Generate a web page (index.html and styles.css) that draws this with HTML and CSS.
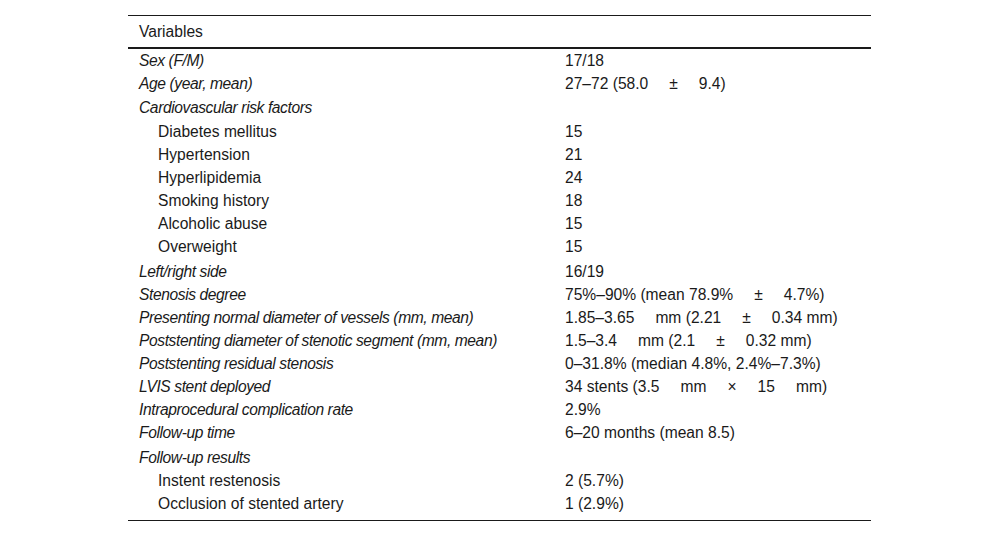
FILE: index.html
```html
<!DOCTYPE html>
<html>
<head>
<meta charset="utf-8">
<link rel="stylesheet" href="styles.css">
</head>
<body>
<div class="wrap">
<table class="tbl">
  <thead>
    <tr><th class="c1">Variables</th><th class="c2"></th></tr>
  </thead>
  <tbody>
    <tr class="first"><td class="lab">Sex (F/M)</td><td>17/18</td></tr>
    <tr><td class="lab">Age (year, mean)</td><td>27–72 (58.0<span class="g"></span>±<span class="g"></span>9.4)</td></tr>
    <tr class="grp"><td class="lab">Cardiovascular risk factors</td><td></td></tr>
    <tr class="after"><td class="sub">Diabetes mellitus</td><td>15</td></tr>
    <tr><td class="sub">Hypertension</td><td>21</td></tr>
    <tr><td class="sub">Hyperlipidemia</td><td>24</td></tr>
    <tr><td class="sub">Smoking history</td><td>18</td></tr>
    <tr><td class="sub">Alcoholic abuse</td><td>15</td></tr>
    <tr><td class="sub">Overweight</td><td>15</td></tr>
    <tr class="grp2"><td class="lab">Left/right side</td><td>16/19</td></tr>
    <tr><td class="lab">Stenosis degree</td><td>75%–90% (mean 78.9%<span class="g"></span>±<span class="g"></span>4.7%)</td></tr>
    <tr><td class="lab">Presenting normal diameter of vessels (mm, mean)</td><td>1.85–3.65<span class="g"></span>mm (2.21<span class="g"></span>±<span class="g"></span>0.34 mm)</td></tr>
    <tr><td class="lab">Poststenting diameter of stenotic segment (mm, mean)</td><td>1.5–3.4<span class="g"></span>mm (2.1<span class="g"></span>±<span class="g"></span>0.32 mm)</td></tr>
    <tr><td class="lab">Poststenting residual stenosis</td><td>0–31.8% (median 4.8%, 2.4%–7.3%)</td></tr>
    <tr><td class="lab">LVIS stent deployed</td><td>34 stents (3.5<span class="g"></span>mm<span class="g"></span>×<span class="g"></span>15<span class="g"></span>mm)</td></tr>
    <tr><td class="lab">Intraprocedural complication rate</td><td>2.9%</td></tr>
    <tr><td class="lab">Follow-up time</td><td>6–20 months (mean 8.5)</td></tr>
    <tr class="grp2"><td class="lab">Follow-up results</td><td></td></tr>
    <tr><td class="sub">Instent restenosis</td><td>2 (5.7%)</td></tr>
    <tr class="last"><td class="sub">Occlusion of stented artery</td><td>1 (2.9%)</td></tr>
  </tbody>
</table>
</div>
</body>
</html>
```
FILE: styles.css
```css
html, body {
  margin: 0;
  padding: 0;
  background: #fff;
}
body {
  font-family: "Liberation Sans", Arial, sans-serif;
  font-size: 15.6px;
  color: #1a1a1a;
}
.wrap {
  padding: 15px 0 0 128px;
}
.tbl {
  width: 743px;
  border-collapse: collapse;
  border-top: 1px solid #1a1a1a;
  border-bottom: 1px solid #1a1a1a;
}
.tbl th {
  font-weight: normal;
  text-align: left;
  padding: 7px 11px 7px 11px;
  line-height: 17px;
  border-bottom: 2px solid #1a1a1a;
}
.tbl th.c1 {
  width: 404px;
}
.tbl td {
  padding: 3px 11px 2px 11px;
  line-height: 18px;
  vertical-align: top;
  white-space: nowrap;
}
.tbl td.lab {
  font-style: italic;
  letter-spacing: -0.4px;
}
.tbl td.sub {
  padding-left: 30px;
}
.tbl tr.first td {
  padding-top: 3px;
}
.tbl tr.grp td {
  padding-top: 4px;
}
.tbl tr.after td {
  padding-top: 4px;
}
.tbl tr.grp2 td {
  padding-top: 5px;
}
.tbl tr.last td {
  padding-bottom: 7px;
}
.g {
  display: inline-block;
  width: 21px;
}
```
